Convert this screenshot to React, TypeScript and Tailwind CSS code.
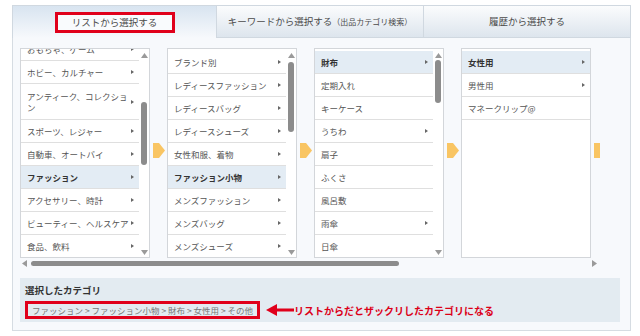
import React from "react";

type Row = {
  label: React.ReactNode;
  arrow?: boolean;
  selected?: boolean;
  tall?: boolean;
};

const col1: Row[] = [
  { label: "おもちゃ、ゲーム", arrow: true },
  { label: "ホビー、カルチャー", arrow: true },
  {
    label: (
      <>
        アンティーク、コレクショ
        <br />ン
      </>
    ),
    arrow: true,
    tall: true,
  },
  { label: "スポーツ、レジャー", arrow: true },
  { label: "自動車、オートバイ", arrow: true },
  { label: "ファッション", arrow: true, selected: true },
  { label: "アクセサリー、時計", arrow: true },
  { label: "ビューティー、ヘルスケア", arrow: true },
  { label: "食品、飲料", arrow: true },
];

const col2: Row[] = [
  { label: "ブランド別", arrow: true },
  { label: "レディースファッション", arrow: true },
  { label: "レディースバッグ", arrow: true },
  { label: "レディースシューズ", arrow: true },
  { label: "女性和服、着物", arrow: true },
  { label: "ファッション小物", arrow: true, selected: true },
  { label: "メンズファッション", arrow: true },
  { label: "メンズバッグ", arrow: true },
  { label: "メンズシューズ", arrow: true },
];

const col3: Row[] = [
  { label: "財布", arrow: true, selected: true },
  { label: "定期入れ" },
  { label: "キーケース" },
  { label: "うちわ", arrow: true },
  { label: "扇子" },
  { label: "ふくさ" },
  { label: "風呂敷" },
  { label: "雨傘", arrow: true },
  { label: "日傘" },
];

const col4: Row[] = [
  { label: "女性用", arrow: true, selected: true },
  { label: "男性用", arrow: true },
  { label: "マネークリップ@" },
];

function Chevron() {
  return (
    <span className="ml-auto mr-[5px] shrink-0 border-y-[2.5px] border-l-[3px] border-y-transparent border-l-[#666]" />
  );
}

function Tri({ dir }: { dir: "up" | "down" | "left" | "right" }) {
  const pts = {
    up: "0,5 3.5,0 7,5",
    down: "0,0 7,0 3.5,5",
    left: "5,0 5,7 0,3.5",
    right: "0,0 0,7 5,3.5",
  }[dir];
  const wide = dir === "up" || dir === "down";
  return (
    <svg width={wide ? 7 : 5} height={wide ? 5 : 7} className="block">
      <polygon points={pts} fill="#9a9a9a" />
    </svg>
  );
}

function ListRow({ row }: { row: Row }) {
  return (
    <div
      className={
        "flex items-center border-b border-[#dfdfdf] pl-[6px] text-[8.5px] leading-[11px] " +
        (row.tall ? "h-[36px] " : "h-[23px] ") +
        (row.selected ? "bg-[#e3ecf4] font-bold text-[#333]" : "text-[#555]")
      }
    >
      <span className="whitespace-nowrap">{row.label}</span>
      {row.arrow && <Chevron />}
    </div>
  );
}

function Column({
  rows,
  offset,
  thumb,
}: {
  rows: Row[];
  offset?: boolean;
  thumb?: "a" | "b" | "c";
}) {
  return (
    <div className="flex h-[210px] w-[130px] shrink-0 border border-[#d3d6da] bg-white">
      <div className={"h-full overflow-hidden " + (thumb ? "w-[118px]" : "w-full")}>
        <div className={offset ? "-mt-[11px]" : "pt-[2px]"}>
          {rows.map((r, i) => (
            <ListRow key={i} row={r} />
          ))}
        </div>
      </div>
      {thumb && (
        <div className="relative flex w-[10px] flex-col items-center pt-[4px] pb-[2px]">
          <Tri dir="up" />
          {thumb === "a" && <div className="absolute top-[53px] h-[63px] w-[6px] rounded-full bg-[#8c8c8c]" />}
          {thumb === "b" && <div className="absolute top-[13px] h-[70px] w-[6px] rounded-full bg-[#8c8c8c]" />}
          {thumb === "c" && <div className="absolute top-[11px] h-[43px] w-[6px] rounded-full bg-[#8c8c8c]" />}
          <div className="mt-auto">
            <Tri dir="down" />
          </div>
        </div>
      )}
    </div>
  );
}

function NextArrow() {
  return (
    <div className="flex w-[17px] shrink-0 items-center justify-center -translate-y-[3px]">
      <svg width="12" height="15" className="block shrink-0">
        <polygon points="0,0 6,0 12,7.5 6,15 0,15" fill="#f9c563" />
      </svg>
    </div>
  );
}

export default function App() {
  return (
    <div className="h-[336px] w-[640px] bg-white pl-[12px] pt-[5px] font-['Noto_Sans_CJK_JP',sans-serif]">
      <div className="w-[619px]">
        {/* tabs */}
        <div className="flex h-[33px] text-[9.5px] text-[#4a4a4a]">
          <div className="flex w-[204px] items-center justify-center border-l border-t border-[#d0d8e0] bg-gradient-to-b from-[#d8e4f0] to-[#f7f9fc]">
            <div className="flex h-[21px] w-[120px] items-center justify-center border-[3px] border-[#e0001b] bg-[#f9fbfd]">
              リストから選択する
            </div>
          </div>
          <div className="flex w-[207px] items-center justify-center border-b border-l border-t border-[#d0d8e0] bg-gradient-to-b from-[#fbfcfd] to-[#dde5ed]">
            キーワードから選択する
            <span className="text-[8px]">（出品カテゴリ検索）</span>
          </div>
          <div className="flex w-[208px] items-center justify-center border border-[#d0d8e0] bg-gradient-to-b from-[#fbfcfd] to-[#dde5ed]">
            履歴から選択する
          </div>
        </div>

        {/* panel */}
        <div className="border-x border-b border-[#d6dce2] bg-[#f7f9fc] pl-[7px] pt-[10px] pb-[8px]">
          <div className="w-[580px] overflow-hidden">
            <div className="flex">
              <Column rows={col1} offset thumb="a" />
              <NextArrow />
              <Column rows={col2} thumb="b" />
              <NextArrow />
              <Column rows={col3} thumb="c" />
              <NextArrow />
              <Column rows={col4} />
              <NextArrow />
            </div>
            <div className="flex h-[10px] items-center">
              <div className="ml-[2px]">
                <Tri dir="left" />
              </div>
              <div className="ml-[4px] h-[5px] w-[368px] rounded-full bg-[#8c8c8c]" />
              <div className="ml-auto mr-[3px]">
                <Tri dir="right" />
              </div>
            </div>
          </div>

          <div className="mt-[10px] h-[44px] w-[600px] bg-[#e3ebf1] pl-[5px] pt-[6px]">
            <div className="text-[9.5px] font-bold leading-[13px] text-[#333]">選択したカテゴリ</div>
            <div className="mt-[4px] flex items-center">
              <div className="flex h-[18px] items-center border-[3px] border-[#e0001b] px-[4px] text-[8.5px] text-[#777]">
                ファッション &gt; ファッション小物 &gt; 財布 &gt; 女性用 &gt; その他
              </div>
              <svg width="28" height="14" className="ml-[6px] block">
                <polygon points="0,7 11,1 11,13" fill="#e0001b" />
                <rect x="10" y="5.5" width="18" height="3" fill="#e0001b" />
              </svg>
              <span className="text-[10px] font-bold text-[#dc0018]">
                リストからだとザックリしたカテゴリになる
              </span>
            </div>
          </div>
        </div>
      </div>
    </div>
  );
}
